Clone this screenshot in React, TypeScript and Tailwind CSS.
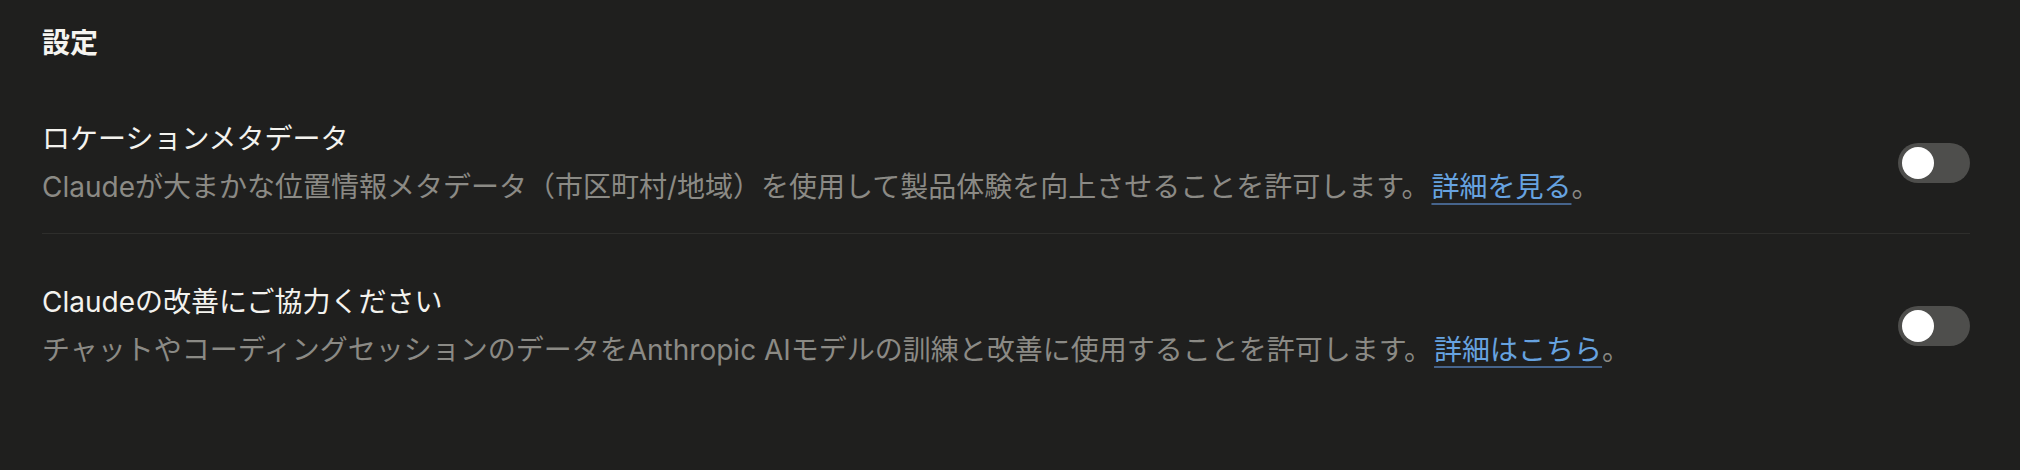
import { useState } from "react";

type RowProps = {
  title: string;
  desc: string;
  linkText: string;
  className?: string;
};

function Toggle() {
  const [on, setOn] = useState(false);
  return (
    <button
      onClick={() => setOn(!on)}
      className={`flex h-[40px] w-[72px] shrink-0 items-center rounded-full p-[4px] ${
        on ? "justify-end bg-[#6aa5e3]" : "justify-start bg-[#4e4e4c]"
      }`}
    >
      <span className="h-[32px] w-[32px] rounded-full bg-white" />
    </button>
  );
}

function SettingRow({ title, desc, linkText, className }: RowProps) {
  return (
    <div className={`flex items-center justify-between gap-8 ${className ?? ""}`}>
      <div className="flex flex-col gap-[6px]">
        <div className="text-[28px] leading-[42px] text-[#f3f2ee]">{title}</div>
        <div className="text-[28px] leading-[42px] text-[#8b8a85]">
          {desc}
          <a
            href="#"
            className="ml-[2px] text-[#67a3e0] underline decoration-[#46648c] decoration-2 underline-offset-[6px]"
          >
            {linkText}
          </a>
          。
        </div>
      </div>
      <Toggle />
    </div>
  );
}

export default function App() {
  return (
    <div
      className="min-h-[470px] w-full bg-[#1f1f1e] pl-[42px] pr-[50px] pt-[22px]"
      style={{ fontFamily: 'Inter, "Noto Sans CJK JP", sans-serif' }}
    >
      <h1 className="text-[28px] font-bold leading-[42px] text-[#f5f4f0]">設定</h1>
      <div className="mt-[30px]">
        <SettingRow
          className="border-b border-[#2e2e2c] pb-[25px] pt-[24px]"
          title="ロケーションメタデータ"
          desc="Claudeが大まかな位置情報メタデータ（市区町村/地域）を使用して製品体験を向上させることを許可します。"
          linkText="詳細を見る"
        />
        <SettingRow
          className="pb-[24px] pt-[47px]"
          title="Claudeの改善にご協力ください"
          desc="チャットやコーディングセッションのデータをAnthropic AIモデルの訓練と改善に使用することを許可します。"
          linkText="詳細はこちら"
        />
      </div>
    </div>
  );
}
